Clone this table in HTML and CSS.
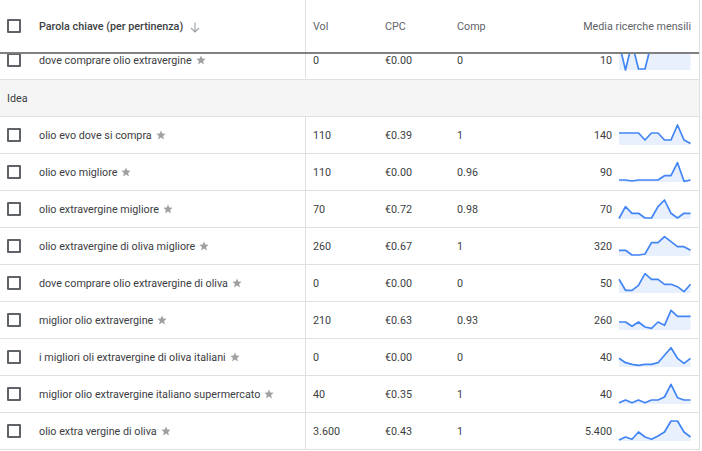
FILE: index.html
```html
<!DOCTYPE html>
<html lang="it">
<head>
<meta charset="utf-8">
<title>Parole chiave</title>
<link rel="stylesheet" href="styles.css">
</head>
<body>
<div class="table">
  <div class="row head">
    <div class="kw"><span class="cb"></span><span class="ht">Parola chiave (per pertinenza)</span>
      <svg class="arrow" width="10" height="11" viewBox="0 0 10 11"><path d="M5 0.5V10M1 6l4 4 4-4" fill="none" stroke="#9aa0a6" stroke-width="1.1"/></svg>
    </div>
    <div class="c">Vol</div>
    <div class="c">CPC</div>
    <div class="c">Comp</div>
    <div class="c m">Media ricerche mensili</div>
  </div>

  <div class="clip">
    <div class="row r1">
      <div class="kw"><span class="cb"></span>dove comprare olio extravergine<svg class="star" viewBox="0 0 10 10"><polygon points="5,0.5 6.3,3.6 9.6,3.8 7.1,6 7.9,9.4 5,7.6 2.1,9.4 2.9,6 0.4,3.8 3.7,3.6"/></svg></div>
      <div class="c">0</div>
      <div class="c">€0.00</div>
      <div class="c">0</div>
      <div class="c m">10<svg class="spark" viewBox="0 0 72 21"><polygon class="fill" points="0,-6 6.5,21 13,-6 19.5,20 26,20 32.5,-6 39,-7 45.5,-6 52,-7 58.5,-6 65,-7 71.5,-6 71.5,21 0,21"/><polyline class="line" points="0,-6 6.5,21 13,-6 19.5,20 26,20 32.5,-6 39,-7 45.5,-6 52,-7 58.5,-6 65,-7 71.5,-6"/></svg></div>
    </div>
  </div>

  <div class="group">Idea</div>

  <div class="row">
    <div class="kw"><span class="cb"></span>olio evo dove si compra<svg class="star" viewBox="0 0 10 10"><polygon points="5,0.5 6.3,3.6 9.6,3.8 7.1,6 7.9,9.4 5,7.6 2.1,9.4 2.9,6 0.4,3.8 3.7,3.6"/></svg></div>
    <div class="c">110</div>
    <div class="c">€0.39</div>
    <div class="c">1</div>
    <div class="c m">140<svg class="spark" viewBox="0 0 72 21"><polygon class="fill" points="0,9 6.5,9 13,9 19.5,9 26,16 32.5,9 39,9 45.5,16 52,16 58.5,1 65,16 71.5,19.5 71.5,21 0,21"/><polyline class="line" points="0,9 6.5,9 13,9 19.5,9 26,16 32.5,9 39,9 45.5,16 52,16 58.5,1 65,16 71.5,19.5"/></svg></div>
  </div>

  <div class="row">
    <div class="kw"><span class="cb"></span>olio evo migliore<svg class="star" viewBox="0 0 10 10"><polygon points="5,0.5 6.3,3.6 9.6,3.8 7.1,6 7.9,9.4 5,7.6 2.1,9.4 2.9,6 0.4,3.8 3.7,3.6"/></svg></div>
    <div class="c">110</div>
    <div class="c">€0.00</div>
    <div class="c">0.96</div>
    <div class="c m">90<svg class="spark" viewBox="0 0 72 21"><polygon class="fill" points="0,19 6.5,19 13,20 19.5,19 26,19 32.5,19 39,19 45.5,14.7 52,14.7 58.5,1.7 65,20.3 71.5,19 71.5,21 0,21"/><polyline class="line" points="0,19 6.5,19 13,20 19.5,19 26,19 32.5,19 39,19 45.5,14.7 52,14.7 58.5,1.7 65,20.3 71.5,19"/></svg></div>
  </div>

  <div class="row">
    <div class="kw"><span class="cb"></span>olio extravergine migliore<svg class="star" viewBox="0 0 10 10"><polygon points="5,0.5 6.3,3.6 9.6,3.8 7.1,6 7.9,9.4 5,7.6 2.1,9.4 2.9,6 0.4,3.8 3.7,3.6"/></svg></div>
    <div class="c">70</div>
    <div class="c">€0.72</div>
    <div class="c">0.98</div>
    <div class="c m">70<svg class="spark" viewBox="0 0 72 21"><polygon class="fill" points="0,20.5 6.5,8.7 13,15.3 19.5,15.3 26,20 32.5,20 39,8.7 45.5,2 52,15.3 58.5,20 65,15.3 71.5,15.3 71.5,21 0,21"/><polyline class="line" points="0,20.5 6.5,8.7 13,15.3 19.5,15.3 26,20 32.5,20 39,8.7 45.5,2 52,15.3 58.5,20 65,15.3 71.5,15.3"/></svg></div>
  </div>

  <div class="row">
    <div class="kw"><span class="cb"></span>olio extravergine di oliva migliore<svg class="star" viewBox="0 0 10 10"><polygon points="5,0.5 6.3,3.6 9.6,3.8 7.1,6 7.9,9.4 5,7.6 2.1,9.4 2.9,6 0.4,3.8 3.7,3.6"/></svg></div>
    <div class="c">260</div>
    <div class="c">€0.67</div>
    <div class="c">1</div>
    <div class="c m">320<svg class="spark" viewBox="0 0 72 21"><polygon class="fill" points="0,15.3 6.5,15.3 13,20 19.5,20 26,19 32.5,7.7 39,7.7 45.5,1.7 52,6.7 58.5,11.7 65,11.7 71.5,15.3 71.5,21 0,21"/><polyline class="line" points="0,15.3 6.5,15.3 13,20 19.5,20 26,19 32.5,7.7 39,7.7 45.5,1.7 52,6.7 58.5,11.7 65,11.7 71.5,15.3"/></svg></div>
  </div>

  <div class="row">
    <div class="kw"><span class="cb"></span>dove comprare olio extravergine di oliva<svg class="star" viewBox="0 0 10 10"><polygon points="5,0.5 6.3,3.6 9.6,3.8 7.1,6 7.9,9.4 5,7.6 2.1,9.4 2.9,6 0.4,3.8 3.7,3.6"/></svg></div>
    <div class="c">0</div>
    <div class="c">€0.00</div>
    <div class="c">0</div>
    <div class="c m">50<svg class="spark" viewBox="0 0 72 21"><polygon class="fill" points="0,7.3 6.5,18.3 13,18.3 19.5,13.3 26,1.7 32.5,7.3 39,7.3 45.5,12.3 52,12.3 58.5,14.7 65,19.7 71.5,12.3 71.5,21 0,21"/><polyline class="line" points="0,7.3 6.5,18.3 13,18.3 19.5,13.3 26,1.7 32.5,7.3 39,7.3 45.5,12.3 52,12.3 58.5,14.7 65,19.7 71.5,12.3"/></svg></div>
  </div>

  <div class="row">
    <div class="kw"><span class="cb"></span>miglior olio extravergine<svg class="star" viewBox="0 0 10 10"><polygon points="5,0.5 6.3,3.6 9.6,3.8 7.1,6 7.9,9.4 5,7.6 2.1,9.4 2.9,6 0.4,3.8 3.7,3.6"/></svg></div>
    <div class="c">210</div>
    <div class="c">€0.63</div>
    <div class="c">0.93</div>
    <div class="c m">260<svg class="spark" viewBox="0 0 72 21"><polygon class="fill" points="0,13 6.5,13 13,17.3 19.5,13 26,18 32.5,19.3 39,13 45.5,16.3 52,1.3 58.5,7.3 65,7.3 71.5,7.3 71.5,21 0,21"/><polyline class="line" points="0,13 6.5,13 13,17.3 19.5,13 26,18 32.5,19.3 39,13 45.5,16.3 52,1.3 58.5,7.3 65,7.3 71.5,7.3"/></svg></div>
  </div>

  <div class="row">
    <div class="kw"><span class="cb"></span>i migliori oli extravergine di oliva italiani<svg class="star" viewBox="0 0 10 10"><polygon points="5,0.5 6.3,3.6 9.6,3.8 7.1,6 7.9,9.4 5,7.6 2.1,9.4 2.9,6 0.4,3.8 3.7,3.6"/></svg></div>
    <div class="c">0</div>
    <div class="c">€0.00</div>
    <div class="c">0</div>
    <div class="c m">40<svg class="spark" viewBox="0 0 72 21"><polygon class="fill" points="0,12.3 6.5,16.7 13,18.3 19.5,19.3 26,18.3 32.5,18.3 39,16.7 45.5,9.3 52,1.7 58.5,12.3 65,17.3 71.5,12.3 71.5,21 0,21"/><polyline class="line" points="0,12.3 6.5,16.7 13,18.3 19.5,19.3 26,18.3 32.5,18.3 39,16.7 45.5,9.3 52,1.7 58.5,12.3 65,17.3 71.5,12.3"/></svg></div>
  </div>

  <div class="row">
    <div class="kw"><span class="cb"></span>miglior olio extravergine italiano supermercato<svg class="star" viewBox="0 0 10 10"><polygon points="5,0.5 6.3,3.6 9.6,3.8 7.1,6 7.9,9.4 5,7.6 2.1,9.4 2.9,6 0.4,3.8 3.7,3.6"/></svg></div>
    <div class="c">40</div>
    <div class="c">€0.35</div>
    <div class="c">1</div>
    <div class="c m">40<svg class="spark" viewBox="0 0 72 21"><polygon class="fill" points="0,19.7 6.5,17 13,19.7 19.5,17 26,19.7 32.5,17 39,17 45.5,14 52,1.3 58.5,14.7 65,17 71.5,17 71.5,21 0,21"/><polyline class="line" points="0,19.7 6.5,17 13,19.7 19.5,17 26,19.7 32.5,17 39,17 45.5,14 52,1.3 58.5,14.7 65,17 71.5,17"/></svg></div>
  </div>

  <div class="row">
    <div class="kw"><span class="cb"></span>olio extra vergine di oliva<svg class="star" viewBox="0 0 10 10"><polygon points="5,0.5 6.3,3.6 9.6,3.8 7.1,6 7.9,9.4 5,7.6 2.1,9.4 2.9,6 0.4,3.8 3.7,3.6"/></svg></div>
    <div class="c">3.600</div>
    <div class="c">€0.43</div>
    <div class="c">1</div>
    <div class="c m">5.400<svg class="spark" viewBox="0 0 72 21"><polygon class="fill" points="0,20 6.5,17 13,19.3 19.5,12 26,17 32.5,19.3 39,16 45.5,12 52,1 58.5,1 65,12 71.5,17 71.5,21 0,21"/><polyline class="line" points="0,20 6.5,17 13,19.3 19.5,12 26,17 32.5,19.3 39,16 45.5,12 52,1 58.5,1 65,12 71.5,17"/></svg></div>
  </div>
</div>
</body>
</html>
```

FILE: styles.css
```css
html, body {
  margin: 0;
  padding: 0;
  background: #ffffff;
}
body {
  font-family: Roboto, "Liberation Sans", Arial, sans-serif;
  font-size: 10.75px;
  color: #3c4043;
  overflow: hidden;
}
.table {
  width: 699px;
  border-right: 1px solid #e0e0e0;
}
.row {
  display: grid;
  grid-template-columns: 306px 72px 72px 72px 1fr;
  height: 36px;
  border-bottom: 1px solid #e0e0e0;
  align-items: stretch;
}
.row > div {
  display: flex;
  align-items: center;
  white-space: nowrap;
}
.kw {
  padding-left: 7px;
  border-right: 1px solid #e0e0e0;
}
.c {
  padding-left: 7px;
}
.c.m {
  justify-content: flex-end;
  padding-left: 0;
  padding-right: 8px;
}
.cb {
  width: 10px;
  height: 10px;
  border: 2px solid #5f6368;
  border-radius: 1px;
  margin-right: 18px;
  flex: none;
}
.head {
  height: 52px;
  border-bottom: 2px solid #808080;
  color: #5f6368;
}
.head .ht {
  font-weight: 500;
  color: #3c4043;
}
.arrow {
  margin-left: 7px;
  margin-top: 2px;
}
.clip {
  height: 25px;
  overflow: hidden;
  border-bottom: 1px solid #e0e0e0;
}
.r1 {
  margin-top: -12px;
  border-bottom: none;
}
.group {
  height: 36px;
  background: #f5f5f5;
  border-bottom: 1px solid #e0e0e0;
  display: flex;
  align-items: center;
  padding-left: 7px;
}
.star {
  width: 10px;
  height: 10px;
  margin-left: 4px;
  fill: #a0a0a0;
  flex: none;
}
.spark {
  width: 72px;
  height: 21px;
  margin-left: 7px;
  margin-bottom: 2px;
  overflow: visible;
  flex: none;
}
.spark .fill {
  fill: #e8f0fe;
}
.spark .line {
  fill: none;
  stroke: #4285f4;
  stroke-width: 1.7;
  stroke-linejoin: round;
}
```
